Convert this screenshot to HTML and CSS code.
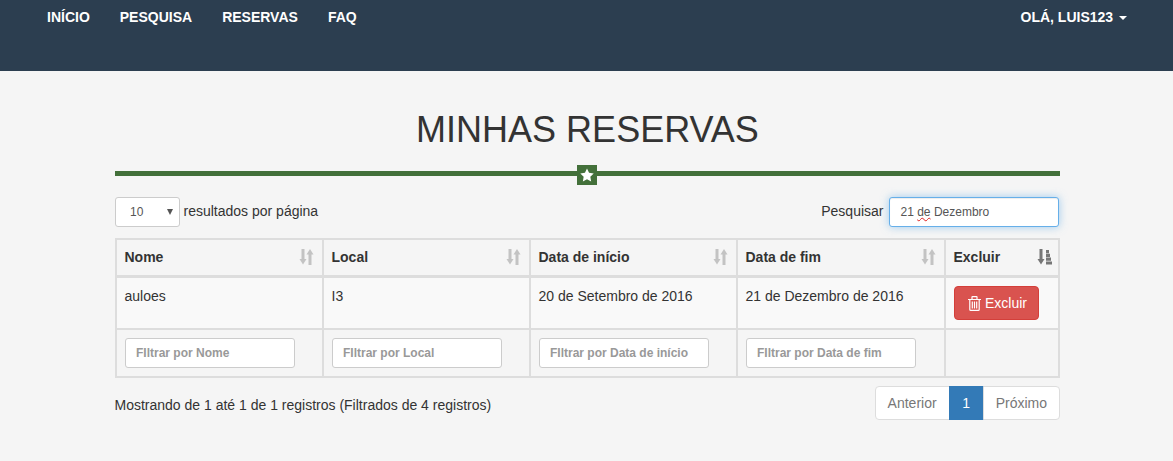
FILE: index.html
```html
<!DOCTYPE html>
<html lang="pt-BR">
<head>
    <meta charset="UTF-8">
    <title>Minhas Reservas</title>
    <link rel="stylesheet" href="styles.css">
</head>
<body>
    <svg class="iconDefs" width="0" height="0">
        <symbol id="iconSort" viewBox="0 0 15 16">
            <path d="M2.500 0h3v10h2L4 15.500.5 10h2zM11 0l3.500 5.500h-2V16h-3V5.500h-2z"/>
        </symbol>
        <symbol id="iconSortActive" viewBox="0 0 15 16">
            <path d="M2.500 0h3v10h2L4 15.500.5 10h2zM9 1h3v3.200H9zM9 4.800h4v3.200H9zM9 8.600h5v3.200H9zM9 12.400h6v3.200H9z"/>
        </symbol>
    </svg>

    <nav class="navbar">
        <ul class="navLinks">
            <li><a href="#">Início</a></li>
            <li><a href="#">Pesquisa</a></li>
            <li><a href="#">Reservas</a></li>
            <li><a href="#">FAQ</a></li>
        </ul>
        <a class="navUser" href="#">Olá, Luis123 <span class="caret"></span></a>
    </nav>

    <main class="content">
        <h1 class="pageTitle">Minhas Reservas</h1>
        <div class="divider">
            <span class="dividerStar">
                <svg width="14" height="14" viewBox="0 0 24 24"><path d="M12 .8l3.500 7.400 8 1.100-5.800 5.600 1.400 8.100-7.100-3.900L4.900 23l1.400-8.100L.5 9.300l8-1.100z"/></svg>
            </span>
        </div>

        <div class="tableControls">
            <label class="lengthControl">
                <span class="selectWrap"><select class="lengthSelect"><option>10</option></select></span>
                resultados por página
            </label>
            <div class="searchControl">
                <span>Pesquisar</span>
                <div class="searchBox">21 <span class="misspelled">de</span> Dezembro</div>
            </div>
        </div>

        <table class="reservas">
            <colgroup>
                <col class="colWide"><col class="colWide"><col class="colWide"><col class="colWider"><col>
            </colgroup>
            <thead>
                <tr>
                    <th><div class="thInner">Nome <svg class="sortIcon"><use href="#iconSort"/></svg></div></th>
                    <th><div class="thInner">Local <svg class="sortIcon"><use href="#iconSort"/></svg></div></th>
                    <th><div class="thInner">Data de início <svg class="sortIcon"><use href="#iconSort"/></svg></div></th>
                    <th><div class="thInner">Data de fim <svg class="sortIcon"><use href="#iconSort"/></svg></div></th>
                    <th><div class="thInner">Excluir <svg class="sortIcon active"><use href="#iconSortActive"/></svg></div></th>
                </tr>
            </thead>
            <tbody>
                <tr class="dataRow">
                    <td>auloes</td>
                    <td>I3</td>
                    <td>20 de Setembro de 2016</td>
                    <td>21 de Dezembro de 2016</td>
                    <td>
                        <button class="btnExcluir">
                            <svg width="13" height="15" viewBox="0 0 13 15" fill="none" stroke="#fff" stroke-width="1.200">
                                <path d="M0 3.500h13M4 3.500V1.100q0-.5.5-.5h4q.5 0 .5.5v2.400M1.800 3.500v9.900q0 1 1 1h7.400q1 0 1-1V3.500"/>
                                <path d="M4.300 5.500v7M6.500 5.500v7M8.700 5.500v7"/>
                            </svg>
                            Excluir
                        </button>
                    </td>
                </tr>
            </tbody>
            <tfoot>
                <tr>
                    <td><input class="filterInput" placeholder="FIltrar por Nome"></td>
                    <td><input class="filterInput" placeholder="FIltrar por Local"></td>
                    <td><input class="filterInput" placeholder="FIltrar por Data de início"></td>
                    <td><input class="filterInput" placeholder="FIltrar por Data de fim"></td>
                    <td></td>
                </tr>
            </tfoot>
        </table>

        <div class="tableFooter">
            <span class="info">Mostrando de 1 até 1 de 1 registros (Filtrados de 4 registros)</span>
            <div class="pagination">
                <a href="#">Anterior</a>
                <a href="#" class="current">1</a>
                <a href="#">Próximo</a>
            </div>
        </div>
    </main>
</body>
</html>
```

FILE: styles.css
```css
* {
    box-sizing: border-box;
}
html, body {
    margin: 0;
    padding: 0;
    height: 100%;
}
body {
    background-color: #f5f5f5;
    color: #333;
    font-family: "Liberation Sans", Arial, sans-serif;
    font-size: 14px;
    line-height: 20px;
    overflow: hidden;
}
a {
    text-decoration: none;
}
.iconDefs {
    display: block;
    height: 0;
}

/* navbar */
.navbar {
    background-color: #2c3e50;
    height: 71px;
    display: flex;
    justify-content: space-between;
    padding: 0 31px 0 32px;
}
.navLinks {
    display: flex;
    list-style: none;
    margin: 0;
    padding: 0;
}
.navLinks a, .navUser {
    display: block;
    color: #fff;
    font-weight: bold;
    text-transform: uppercase;
    padding: 7px 15px;
}
.caret {
    display: inline-block;
    width: 0;
    height: 0;
    margin-left: 2px;
    vertical-align: middle;
    border-top: 4px solid #fff;
    border-left: 4px solid transparent;
    border-right: 4px solid transparent;
}

/* main */
.content {
    width: 945px;
    margin-left: 115px;
}
.pageTitle {
    font-size: 36px;
    font-weight: normal;
    line-height: 40px;
    text-align: center;
    text-transform: uppercase;
    margin: 39px 0 0;
    color: #333;
}
.divider {
    height: 5px;
    margin-top: 21px;
    background-color: #43703a;
    display: flex;
    justify-content: center;
    align-items: center;
}
.dividerStar {
    flex: none;
    width: 20px;
    height: 20px;
    margin: 3px 1px 0 0;
    background-color: #43703a;
    display: flex;
    align-items: center;
    justify-content: center;
}
.dividerStar svg {
    fill: #fff;
}

/* controls above table */
.tableControls {
    display: flex;
    justify-content: space-between;
    margin-top: 21px;
    padding-right: 1px;
}
.lengthControl, .searchControl {
    display: flex;
    align-items: flex-start;
    line-height: 28px;
}
.selectWrap {
    position: relative;
    display: block;
    height: 30px;
    margin-right: 3.5px;
}
.selectWrap::after {
    content: "";
    position: absolute;
    left: 52px;
    top: 12px;
    border-top: 6px solid #555;
    border-left: 3px solid transparent;
    border-right: 3px solid transparent;
}
.lengthSelect {
    display: block;
    width: 65px;
    height: 30px;
    padding: 5px 10px 5px 14px;
    font-family: inherit;
    font-size: 12px;
    color: #555;
    background-color: #fff;
    border: 1px solid #ccc;
    border-radius: 3px;
    appearance: none;
}
.searchBox {
    width: 170px;
    height: 30px;
    margin-left: 5.5px;
    padding: 4px 10px 4px 10.5px;
    font-size: 12px;
    line-height: 20px;
    color: #555;
    background-color: #fff;
    border: 1px solid #66afe9;
    border-radius: 3px;
    box-shadow: inset 0 1px 1px rgba(0, 0, 0, .075), 0 0 8px rgba(102, 175, 233, .6);
}
.misspelled {
    text-decoration: underline wavy #e02020 1px;
    text-decoration-skip-ink: none;
}

/* table */
.reservas {
    width: 945px;
    margin-top: 11px;
    table-layout: fixed;
    border-collapse: collapse;
    border: 2px solid #ddd;
}
.colWide {
    width: 207px;
}
.colWider {
    width: 208px;
}
.reservas th, .reservas td {
    border: 2px solid #ddd;
    padding: 8px 8px 8px 7.5px;
    text-align: left;
    vertical-align: top;
}
.reservas th {
    padding-top: 7px;
    border-bottom-width: 3px;
    vertical-align: middle;
}
.thInner {
    display: flex;
    justify-content: space-between;
    align-items: center;
}
.sortIcon {
    width: 15px;
    height: 16px;
    fill: #333;
    opacity: .25;
}
.sortIcon.active {
    margin-right: -2px;
    opacity: .65;
}
.dataRow td {
    height: 52px;
    background-color: #f9f9f9;
}
.btnExcluir {
    display: flex;
    align-items: center;
    gap: 4px;
    height: 34px;
    margin-left: .5px;
    padding: 0 11px 0 13px;
    font-family: inherit;
    font-size: 14px;
    color: #fff;
    background-color: #d9534f;
    border: 1px solid #d43f3a;
    border-radius: 4px;
}
.reservas tfoot td {
    height: 48px;
}
.filterInput {
    display: block;
    width: 170px;
    height: 30px;
    margin-left: .5px;
    padding: 5px 9px 5px 10px;
    font-family: inherit;
    font-size: 12px;
    font-weight: bold;
    background-color: #fff;
    border: 1px solid #ccc;
    border-radius: 3px;
}
.filterInput::placeholder {
    color: #999;
}

/* bottom row */
.tableFooter {
    display: flex;
    justify-content: space-between;
    margin-top: 8px;
}
.info {
    padding-top: 9px;
    margin-left: -.5px;
}
.pagination {
    display: flex;
}
.pagination a {
    height: 34px;
    padding: 6px 12px;
    color: #777;
    background-color: #fff;
    border: 1px solid #ddd;
    margin-left: -1px;
}
.pagination a:first-child {
    border-radius: 4px 0 0 4px;
}
.pagination a:last-child {
    border-radius: 0 4px 4px 0;
}
.pagination .current {
    width: 35px;
    text-align: center;
    color: #fff;
    background-color: #337ab7;
    border-color: #337ab7;
}
```
